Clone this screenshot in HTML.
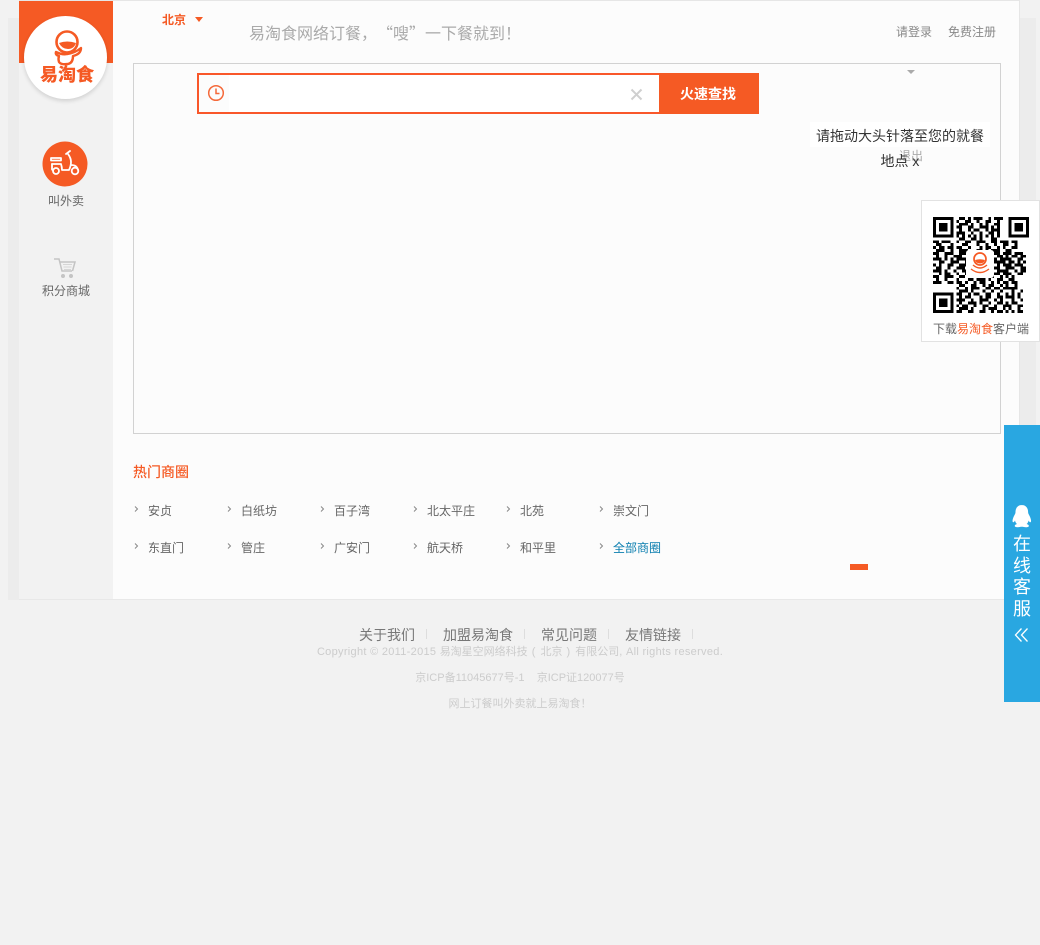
<!DOCTYPE html>
<html lang="zh-CN">
<head>
<meta charset="utf-8">
<title>易淘食</title>
<style>
*{margin:0;padding:0;box-sizing:border-box}
html,body{width:1040px;height:945px;overflow:hidden;background:#f2f2f2;font-family:"Liberation Sans","Noto Sans CJK SC",sans-serif;font-size:12px;color:#666}
.a{position:absolute;white-space:nowrap}
</style>
</head>
<body>
<div class="a" style="left:8px;top:18px;width:1028px;height:582px;background:#ececec"></div>
<div class="a" style="left:19px;top:0;width:1001px;height:600px;background:#fcfcfc;border-top:1px solid #e6e6e6;border-right:1px solid #e6e6e6;border-bottom:1px solid #e8e8e8"></div>
<div class="a" style="left:19px;top:1px;width:94px;height:598px;background:#f2f2f2"></div>
<div class="a" style="left:19px;top:1px;width:94px;height:62px;background:#f55a24"></div>

<div class="a" style="left:24px;top:16px;width:83px;height:83px;border-radius:50%;background:#fff;box-shadow:0 2px 4px rgba(0,0,0,.14)"></div>
<svg class="a" style="left:24px;top:16px" width="83" height="83" viewBox="24 16 83 83">
<circle cx="67" cy="42" r="10.500" fill="none" stroke="#f55a24" stroke-width="2.600"/>
<path d="M59 43q8-3 17 0q-2 6-8 6q-6 0-9-6z" fill="#f55a24"/>
<path d="M56 52q6 3 11 2q8-1 14-6q0 6-8 8q0 7-5 8q-7 1-9-2q-1-3 0-6q-4-1-3-4z" fill="#fff" stroke="#f55a24" stroke-width="2.400" stroke-linejoin="round"/>
</svg>
<div class="a" style="left:39px;top:63px;width:56px;text-align:center;font-size:18px;line-height:24px;font-weight:900;color:#f55a24;letter-spacing:0">易淘食</div>

<svg class="a" style="left:42px;top:141px" width="46" height="46" viewBox="0 0 46 46">
<circle cx="23" cy="23" r="22.500" fill="#f55a24"/>
<g fill="none" stroke="#fff" stroke-width="1.800" stroke-linecap="round" stroke-linejoin="round">
<path d="M9 17h10v2.500h-10z"/>
<path d="M10 23h9q1 3 1 6h7q2-4 2-8q0-4-3-8"/>
<path d="M10 23v5q0 1 1 1"/>
<path d="M24 13l4-3"/>
<path d="M29 24q6 0 7 5"/>
<circle cx="14" cy="30" r="3"/>
<circle cx="33" cy="30" r="3.300"/>
</g>
</svg>
<div class="a" style="left:19px;top:192px;width:94px;text-align:center;line-height:18px">叫外卖</div>

<svg class="a" style="left:53px;top:257px" width="24" height="22" viewBox="0 0 24 22">
<g fill="none" stroke="#c4c4c4" stroke-width="1.500">
<path d="M1 2h5l3 12h10"/>
<path d="M7 5h15l-2.500 9"/>
</g>
<path d="M10 7h9v1h-9zM10.500 9.500h8v1h-8zM11 12h7v1h-7z" fill="#d6d6d6"/>
<circle cx="10" cy="19" r="2" fill="#c4c4c4"/>
<circle cx="18" cy="19" r="2" fill="#c4c4c4"/>
</svg>
<div class="a" style="left:19px;top:282px;width:94px;text-align:center;line-height:18px">积分商城</div>

<div class="a" style="left:162px;top:11px;font-size:12px;line-height:18px;font-weight:700;color:#f55a24">北京</div>
<svg class="a" style="left:194px;top:16px" width="10" height="7"><path d="M1 1h8l-4 5z" fill="#f55a24"/></svg>
<div class="a" style="left:249px;top:20px;font-family:'Noto Sans CJK SC',sans-serif;font-size:16px;line-height:24px;color:#aaa">易淘食网络订餐，<span style="margin-left:8px">“嗖”一下餐就到！</span></div>
<div class="a" style="left:896px;top:23px;line-height:18px;color:#888">请登录</div>
<div class="a" style="left:948px;top:23px;line-height:18px;color:#888">免费注册</div>

<div class="a" style="left:133px;top:63px;width:868px;height:371px;background:#fcfcfc;border:1px solid #d2d2d2"></div>
<svg class="a" style="left:907px;top:70px" width="9" height="5"><path d="M0 0h8l-4 4z" fill="#aaa"/></svg>

<div class="a" style="left:197px;top:73px;width:462px;height:41px;background:#fff;border:2px solid #f9572a;border-right:0"></div>
<div class="a" style="left:199px;top:75px;width:30px;height:37px;background:#fcfcfc"></div>
<svg class="a" style="left:207px;top:84px" width="18" height="18" viewBox="0 0 18 18">
<circle cx="9" cy="9" r="7.300" fill="none" stroke="#f5693a" stroke-width="1.500"/>
<path d="M9 4.500v5h3.500" fill="none" stroke="#f5693a" stroke-width="1.500"/>
</svg>
<svg class="a" style="left:630px;top:88px" width="13" height="13" viewBox="0 0 13 13">
<path d="M1.500 1.500l10 10M11.500 1.500l-10 10" stroke="#cfcfcf" stroke-width="2"/>
</svg>
<div class="a" style="left:659px;top:73px;width:100px;height:41px;background:#f55a24;color:#fff;font-size:14px;font-weight:700;line-height:42px;padding-left:21px">火速查找</div>

<div class="a" style="left:899px;top:147px;line-height:18px;color:#aaa">退出</div>
<div class="a" style="left:810px;top:122px;width:180px;height:25px;background:#fff"></div>
<div class="a" style="left:810px;top:124px;width:180px;text-align:center;font-size:14px;line-height:24px;color:#333">请拖动大头针落至您的就餐</div>
<div class="a" style="left:810px;top:149px;width:180px;text-align:center;font-size:14px;line-height:24px;color:#333">地点 x</div>

<div class="a" style="left:921px;top:200px;width:119px;height:142px;background:#fff;border:1px solid #e2e2e2"></div>
<svg class="a" style="left:933px;top:217px" width="96" height="96" viewBox="0 0 33 33" shape-rendering="crispEdges">
<g fill="none" stroke="#000">
<path d="M.5 .5h6v6h-6zM26.500 .5h6v6h-6zM.5 26.500h6v6h-6z"/>
<path d="M9 .5h2m1 0h1m1 0h3m2 0h1m1 0h3M8 1.500h1m2 0h2m2 0h1m2 0h2m2 0h1M9 2.500h3m1 0h1m2 0h1m1 0h1m2 0h2M8 3.500h2m2 0h2m2 0h3m1 0h1m1 0h1M9 4.500h1m2 0h1m1 0h2m2 0h1m1 0h3M8 5.500h3m2 0h1m2 0h1m2 0h2m1 0h1M8 6.500h1m1 0h1m1 0h1m1 0h1m1 0h1m1 0h1m1 0h1m1 0h1M9 7.500h2m2 0h2m1 0h1m3 0h2M0 8.500h2m1 0h3m2 0h1m2 0h2m2 0h3m2 0h2m1 0h3m1 0h2M1 9.500h2m3 0h1m3 0h2m3 0h1m2 0h1m2 0h1m2 0h2m2 0h1M0 10.500h1m1 0h2m1 0h2m1 0h2m2 0h1m3 0h1m1 0h2m2 0h1m1 0h1m2 0h2M1 11.500h3m2 0h1m2 0h3m3 0h2m1 0h1m1 0h3m2 0h2M0 12.500h2m2 0h3m2 0h1m1 0h1m13 0h2m1 0h3m2 0h1M1 13.500h1m2 0h1m2 0h3m2 0h1m12 0h1m1 0h2m1 0h2M0 14.500h3m1 0h1m1 0h1m1 0h2m1 0h1m12 0h3m2 0h2M2 15.500h2m2 0h3m2 0h1m12 0h1m1 0h2m1 0h1m1 0h1M0 16.500h1m1 0h1m2 0h2m2 0h1m1 0h1m13 0h2m1 0h3M1 17.500h2m2 0h1m2 0h3m1 0h1m12 0h3m2 0h2M0 18.500h3m1 0h1m2 0h1m2 0h2m13 0h1m2 0h1m1 0h2M2 19.500h1m1 0h2m2 0h1m2 0h1m1 0h3m1 0h3m1 0h2m1 0h3m2 0h2M0 20.500h2m2 0h3m2 0h2m2 0h1m2 0h1m2 0h2m2 0h1m1 0h1m1 0h1M1 21.500h1m2 0h1m3 0h1m3 0h2m1 0h3m1 0h1m2 0h2m2 0h2M0 22.500h3m2 0h2m1 0h2m1 0h1m2 0h1m1 0h2m2 0h1m1 0h1m1 0h2m1 0h2M9 23.500h2m2 0h2m2 0h1m1 0h2m2 0h1m1 0h1m2 0h1M8 24.500h1m2 0h1m1 0h3m2 0h2m1 0h2m1 0h5M9 25.500h3m1 0h1m3 0h1m2 0h1m2 0h1m3 0h1m2 0h1M8 26.500h2m2 0h1m1 0h2m2 0h2m2 0h1m2 0h1m1 0h1m1 0h1M9 27.500h1m1 0h2m3 0h1m1 0h2m2 0h2m1 0h3m1 0h1M8 28.500h3m2 0h1m2 0h3m2 0h1m1 0h1m3 0h1m2 0h1M9 29.500h1m2 0h3m1 0h1m2 0h1m2 0h2m1 0h1m1 0h2M8 30.500h1m1 0h2m2 0h1m2 0h2m2 0h1m2 0h3m2 0h2M9 31.500h3m1 0h1m3 0h1m1 0h3m2 0h1m1 0h1m2 0h1M8 32.500h2m2 0h2m2 0h2m2 0h1m1 0h2m1 0h1m1 0h1m1 0h2"/>
<path d="M21 12.500h2m1 0h1M22 13.500h2M21 14.500h1m1 0h2M21 15.500h3M22 16.500h1m1 0h1M21 17.500h2M22 18.500h3M10 12.500h1M10 14.500h1M10 16.500h1M10 18.500h1M13 19.500h2M16 20.500h2M12 21.500h1"/>
</g>
<path d="M2 2h3v3h-3zM28 2h3v3h-3zM2 28h3v3h-3z" fill="#000"/>
</svg>
<svg class="a" style="left:966px;top:250px" width="28" height="28" viewBox="0 0 28 28">
<rect width="28" height="28" rx="3" fill="#fff"/>
<circle cx="14" cy="9" r="6" fill="none" stroke="#f55a24" stroke-width="1.700"/>
<path d="M9 10q5-1.500 10 0q-1 3.500-5 3.500q-4 0-5-3.500z" fill="#f55a24"/>
<path d="M7 15q7 6 14 0M5 19q9 7 18 0" fill="none" stroke="#f55a24" stroke-width="1.400"/>
</svg>
<div class="a" style="left:933px;top:320px;line-height:18px;color:#666">下载<span style="color:#f55a24">易淘食</span>客户端</div>

<div class="a" style="left:133px;top:462px;font-size:14px;line-height:20px;font-weight:500;color:#f55a24">热门商圈</div>

<svg class="a" style="left:133px;top:504px" width="540" height="46" fill="none" stroke="#888" stroke-width="1">
<path d="M2 2.500l2.500 2.500l-2.500 2.500M95 2.500l2.500 2.500l-2.500 2.500M188 2.500l2.500 2.500l-2.500 2.500M281 2.500l2.500 2.500l-2.500 2.500M374 2.500l2.500 2.500l-2.500 2.500M467 2.500l2.500 2.500l-2.500 2.500M2 39.500l2.500 2.500l-2.500 2.500M95 39.500l2.500 2.500l-2.500 2.500M188 39.500l2.500 2.500l-2.500 2.500M281 39.500l2.500 2.500l-2.500 2.500M374 39.500l2.500 2.500l-2.500 2.500M467 39.500l2.500 2.500l-2.500 2.500"/>
</svg>
<div class="a" style="left:148px;top:502px;line-height:18px">安贞</div>
<div class="a" style="left:241px;top:502px;line-height:18px">白纸坊</div>
<div class="a" style="left:334px;top:502px;line-height:18px">百子湾</div>
<div class="a" style="left:427px;top:502px;line-height:18px">北太平庄</div>
<div class="a" style="left:520px;top:502px;line-height:18px">北苑</div>
<div class="a" style="left:613px;top:502px;line-height:18px">崇文门</div>
<div class="a" style="left:148px;top:539px;line-height:18px">东直门</div>
<div class="a" style="left:241px;top:539px;line-height:18px">管庄</div>
<div class="a" style="left:334px;top:539px;line-height:18px">广安门</div>
<div class="a" style="left:427px;top:539px;line-height:18px">航天桥</div>
<div class="a" style="left:520px;top:539px;line-height:18px">和平里</div>
<div class="a" style="left:613px;top:539px;line-height:18px;color:#0b7eaf">全部商圈</div>

<div class="a" style="left:850px;top:564px;width:18px;height:6px;background:#f55a24"></div>

<div class="a" style="left:1004px;top:425px;width:36px;height:277px;background:#29a7e1"></div>
<svg class="a" style="left:1011px;top:504px" width="22" height="24" viewBox="0 0 22 24">
<path d="M11 1c-4.500 0-6.500 3.500-6.500 7c0 1.500-.5 2-1.500 4c-1.500 3-2 6-.8 6.300c.7.1 1.300-.8 1.800-1.800c.3 1.500 1 2.700 2 3.500c-1.500.5-2.500 1.200-2.200 2.200c.3 1 3 1.300 5 .8c1.500-.3 2.500-.3 4 0c2 .5 4.700.2 5-.8c.3-1-.7-1.700-2.200-2.200c1-.8 1.700-2 2-3.500c.5 1 1.100 1.900 1.800 1.800c1.200-.3.700-3.300-.8-6.300c-1-2-1.500-2.500-1.500-4c0-3.500-2-7-6.500-7z" fill="#fff"/>
</svg>
<div class="a" style="left:1004px;top:534px;width:36px;text-align:center;font-size:18px;line-height:21.700px;color:#fff;white-space:normal">在<br>线<br>客<br>服</div>
<svg class="a" style="left:1014px;top:627px" width="15" height="16" viewBox="0 0 15 16" fill="none" stroke="#fff" stroke-width="1.300">
<path d="M7.500 1.500l-6 6.500l6 6.500M13.500 1.500l-6 6.500l6 6.500"/>
</svg>

<div class="a" style="left:359px;top:625px;font-size:14px;line-height:20px;color:#777">关于我们</div>
<div class="a" style="left:426px;top:629px;width:1px;height:10px;background:#ddd"></div>
<div class="a" style="left:443px;top:625px;font-size:14px;line-height:20px;color:#777">加盟易淘食</div>
<div class="a" style="left:524px;top:629px;width:1px;height:10px;background:#ddd"></div>
<div class="a" style="left:541px;top:625px;font-size:14px;line-height:20px;color:#777">常见问题</div>
<div class="a" style="left:608px;top:629px;width:1px;height:10px;background:#ddd"></div>
<div class="a" style="left:625px;top:625px;font-size:14px;line-height:20px;color:#777">友情链接</div>
<div class="a" style="left:692px;top:629px;width:1px;height:10px;background:#ddd"></div>

<div class="a" style="left:0;top:643px;width:1040px;text-align:center;font-size:11px;line-height:18px;color:#ccc"><span style="letter-spacing:.3px">Copyright © 2011-2015 </span>易淘星空网络科技<span style="letter-spacing:1px"> ( </span>北京<span style="letter-spacing:1px"> ) </span>有限公司<span style="letter-spacing:.3px">, All rights reserved.</span></div>
<div class="a" style="left:0;top:669px;width:1040px;text-align:center;font-size:11px;line-height:18px;color:#ccc">京ICP备11045677号-1 &nbsp;&nbsp; 京ICP证120077号</div>
<div class="a" style="left:0;top:695px;width:1040px;text-align:center;font-size:11px;line-height:18px;color:#ccc">网上订餐叫外卖就上易淘食！</div>
</body>
</html>
